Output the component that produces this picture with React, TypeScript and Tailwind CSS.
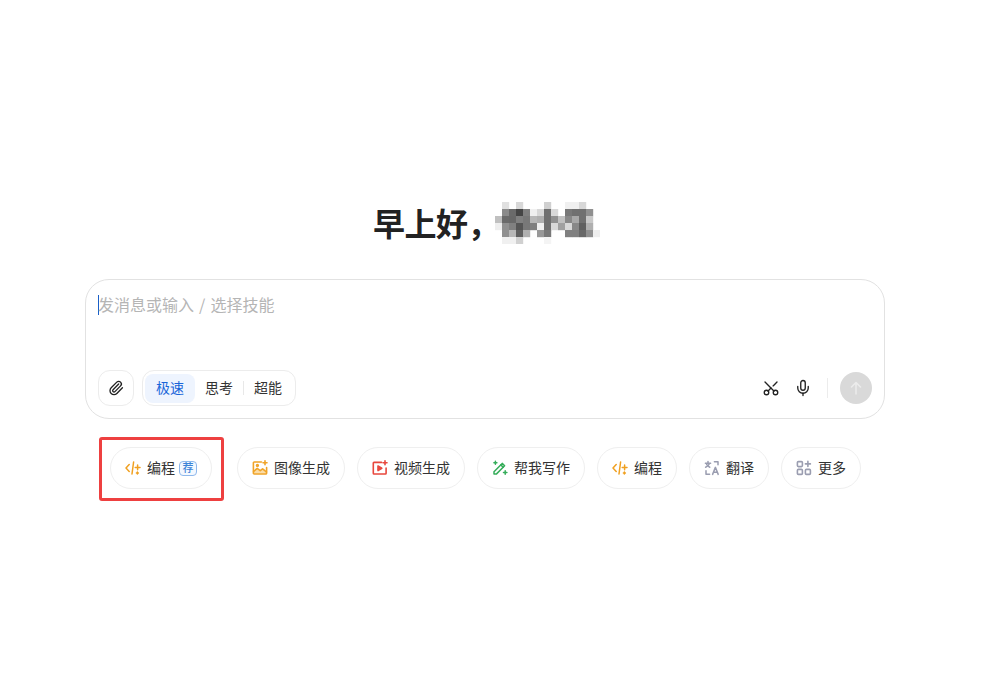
import { Mic, Paperclip, Scissors } from "lucide-react";

const FONT = "font-['Noto_Sans_CJK_SC','Liberation_Sans',sans-serif]";

const MOSAIC = [
  ["ff", "e0", "ff", "d8", "ff", "ff", "ff", "d0", "ff", "ff", "f0", "f0", "d8", "ff", "ff"],
  ["ff", "8a", "6a", "45", "80", "f0", "d8", "70", "d8", "ff", "78", "70", "70", "90", "ff"],
  ["c0", "6a", "68", "80", "78", "b8", "b0", "70", "90", "c0", "88", "a8", "70", "c8", "ff"],
  ["ee", "90", "80", "55", "78", "80", "f0", "70", "d8", "a0", "d8", "88", "60", "b0", "ff"],
  ["ff", "90", "b8", "60", "b0", "ff", "98", "78", "ff", "ff", "80", "80", "68", "90", "ee"],
  ["ff", "f0", "f0", "d0", "ff", "ff", "ff", "f4", "ff", "ff", "ff", "ff", "ff", "ff", "ff"],
];

function NameMosaic() {
  return (
    <svg width="105" height="42" viewBox="0 0 105 42" className="-ml-[4px] shrink-0">
      {MOSAIC.flatMap((row, y) =>
        row.map((v, x) =>
          v === "ff" ? null : <rect key={`${x}-${y}`} x={x * 7} y={y * 7} width="7.2" height="7.2" fill={`#${v}${v}${v}`} />
        )
      )}
    </svg>
  );
}

function CodeIcon() {
  return (
    <svg width="16" height="16" viewBox="0 0 16 16" fill="none" stroke="#f0a020" strokeWidth="1.5" strokeLinecap="round" strokeLinejoin="round">
      <path d="M4.2 4.6 1 8l3.2 3.4" />
      <path d="M8.6 2 7 14" />
      <path d="M12.6 5v4.800M10.200 7.400h4.800M12.400 12v2M11.400 13h2" />
    </svg>
  );
}

function ImageIcon() {
  return (
    <svg width="16" height="16" viewBox="0 0 16 16" fill="none" stroke="#f0a428" strokeWidth="1.6" strokeLinecap="round" strokeLinejoin="round">
      <path d="M1.800 11.500 5.200 8.300l3 2.400 2.400-1.800 3.600 3V13.800H1.800z" fill="#fbdca6" stroke="none" />
      <path d="M9.500 2H2.200a.8.8 0 0 0-.8.8v10.400a.8.8 0 0 0 .8.8h11.600a.8.8 0 0 0 .8-.8V7.500" />
      <path d="m1.600 11.500 3.600-3.200 3 2.400 2.400-1.800 3.800 3" />
      <circle cx="5.400" cy="5.400" r=".9" />
      <path d="M13 .8v4M11 2.800h4" />
    </svg>
  );
}

function VideoIcon() {
  return (
    <svg width="16" height="16" viewBox="0 0 16 16" fill="none" stroke="#e8483e" strokeWidth="1.6" strokeLinecap="round" strokeLinejoin="round">
      <path d="M9.500 2.400H2a.7.7 0 0 0-.7.7v10.200a.7.7 0 0 0 .7.7h11.400a.7.7 0 0 0 .7-.7V8" />
      <path d="M6 6v4.600l3.800-2.300z" fill="#e8483e" />
      <path d="M13 .8v4M11 2.800h4" />
    </svg>
  );
}

function WriteIcon() {
  return (
    <svg width="16" height="16" viewBox="0 0 16 16" fill="none" stroke="#35ad5a" strokeWidth="1.5" strokeLinecap="round" strokeLinejoin="round">
      <path d="m2 11.800 8.200-8.400 2.400 2.400-8.300 8.300H2z" />
      <path d="m8.800 4.900 2.400 2.400" />
      <path d="M3.400 1.200v3M1.900 2.700h3M13.200 10.800v3.400M11.500 12.500h3.400" />
    </svg>
  );
}

function TranslateIcon() {
  return (
    <svg width="16" height="16" viewBox="0 0 16 16" fill="none" stroke="#9a9db0" strokeWidth="1.5" strokeLinecap="round" strokeLinejoin="round">
      <path d="M1.400 3.200h5.200M4 1.600v1.600M5.600 3.200C5 5 3.600 6.400 1.600 7.200M2.600 4.400c.6 1.200 1.800 2.200 3.200 2.800" />
      <path d="M10.400 1.800H14v3M5.600 14.200H2v-3.400" />
      <path d="m8.600 14.400 2.800-7 2.800 7M9.600 12.200h3.600" />
    </svg>
  );
}

function MoreIcon() {
  return (
    <svg width="16" height="16" viewBox="0 0 16 16" fill="none" stroke="#9a9db0" strokeWidth="1.600" strokeLinecap="round" strokeLinejoin="round">
      <rect x="1.400" y="1.600" width="5" height="5" rx="1" />
      <rect x="1.400" y="9.400" width="5" height="5" rx="1" />
      <rect x="9.400" y="9.400" width="5" height="5" rx="1" />
      <path d="M11.900 1.400v5M9.400 3.900h5" />
    </svg>
  );
}

function Chip({ icon, label, badge }: { icon: React.ReactNode; label: string; badge?: boolean }) {
  return (
    <button className="flex h-[42px] shrink-0 items-center gap-[6px] rounded-full border border-[#efefef] bg-white px-[14px] text-[14px] text-[#333]">
      {icon}
      <span className="pb-[2px]">{label}</span>
      {badge ? (
        <span className="-ml-[2px] flex h-[15px] w-[18px] items-center justify-center rounded-[4px] border border-[#8fb8ec] bg-[#f3f8ff] pb-[1px] text-[11px] leading-none font-medium text-[#3b82d6]">
          荐
        </span>
      ) : null}
    </button>
  );
}

export default function App() {
  return (
    <div className={`min-h-[673px] bg-white ${FONT}`}>
      <div className="ml-[85px] w-[800px] pt-[202px]">
        <div className="flex h-[42px] items-center pl-[288px]">
          <h1 className="pb-[3px] text-[32px] leading-[42px] font-bold tracking-[-0.5px] whitespace-nowrap text-[#222]">早上好，</h1>
          <NameMosaic />
        </div>

        <div className="mt-[35px] flex h-[140px] flex-col justify-between rounded-[24px] border border-[#e2e2e2] bg-white pt-[15px] pr-[12px] pb-[12px] pl-[12px]">
          <div className="flex h-[20px] items-center">
            <span className="h-[20px] w-px bg-[#1a5fc8]" />
            <span className="-ml-px pb-[2px] text-[16px] [word-spacing:1.5px] text-[#b5b5b5]">发消息或输入 / 选择技能</span>
          </div>

          <div className="flex items-center justify-between">
            <div className="flex items-center gap-[8px]">
              <button className="flex h-[36px] w-[36px] items-center justify-center rounded-[12px] border border-[#ececec]">
                <Paperclip size={16} strokeWidth={2} color="#222" />
              </button>
              <div className="flex h-[36px] w-[154px] items-center rounded-[12px] border border-[#ececec] pl-[2px] text-[14px] text-[#333]">
                <span className="flex h-[29px] w-[50px] items-center justify-center rounded-[8px] bg-[#eef4fe] pb-[2px] text-[#1a66d9]">极速</span>
                <span className="ml-[10px] pb-[2px]">思考</span>
                <span className="ml-[10px] h-[14px] w-px bg-[#e8e8e8]" />
                <span className="ml-[10px] pb-[2px]">超能</span>
              </div>
            </div>

            <div className="flex items-center">
              <Scissors size={18} strokeWidth={1.8} color="#222" className="-rotate-90" />
              <Mic size={18} strokeWidth={1.8} color="#222" className="ml-[14px]" />
              <span className="mr-[12px] ml-[15px] h-[20px] w-px bg-[#ececec]" />
              <button className="flex h-[32px] w-[32px] items-center justify-center rounded-full bg-[#d9d9d9]">
                <svg width="14" height="14" viewBox="0 0 14 14" fill="none" stroke="#ececec" strokeWidth="1.5" strokeLinecap="round" strokeLinejoin="round">
                  <path d="M7 13V1.500M2.500 6 7 1.500 11.500 6" />
                </svg>
              </button>
            </div>
          </div>
        </div>

        <div className="mt-[28px] flex gap-[12px] pl-[25px]">
          <div className="relative mr-[13px]">
            <Chip icon={<CodeIcon />} label="编程" badge />
            <div className="absolute -top-[10px] -right-[12px] -bottom-[12px] -left-[11px] rounded-[3px] border-[3px] border-[#ee4040]" />
          </div>
          <Chip icon={<ImageIcon />} label="图像生成" />
          <Chip icon={<VideoIcon />} label="视频生成" />
          <Chip icon={<WriteIcon />} label="帮我写作" />
          <Chip icon={<CodeIcon />} label="编程" />
          <Chip icon={<TranslateIcon />} label="翻译" />
          <Chip icon={<MoreIcon />} label="更多" />
        </div>
      </div>
    </div>
  );
}
